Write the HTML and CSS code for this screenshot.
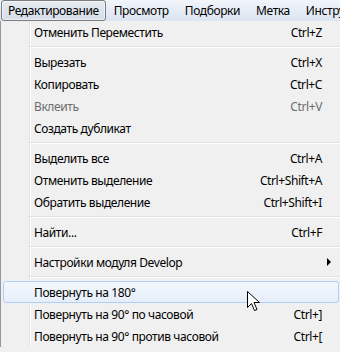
FILE: index.html
```html
<!DOCTYPE html>
<html lang="ru">
<head>
    <meta charset="UTF-8">
    <title>Редактирование</title>
    <link rel="stylesheet" href="styles.css">
</head>
<body>
    <div class="menubar">
        <span class="top open">Редактирование</span>
        <span class="top">Просмотр</span>
        <span class="top">Подборки</span>
        <span class="top">Метка</span>
        <span class="top">Инструменты</span>
    </div>

    <div class="menu">
        <div class="item"><span class="label">Отменить Переместить</span><span class="key">Ctrl+Z</span><span class="sub"></span></div>
        <div class="sep"></div>
        <div class="item"><span class="label">Вырезать</span><span class="key">Ctrl+X</span><span class="sub"></span></div>
        <div class="item"><span class="label">Копировать</span><span class="key">Ctrl+C</span><span class="sub"></span></div>
        <div class="item disabled"><span class="label">Вклеить</span><span class="key">Ctrl+V</span><span class="sub"></span></div>
        <div class="item"><span class="label">Создать дубликат</span><span class="key"></span><span class="sub"></span></div>
        <div class="sep"></div>
        <div class="item"><span class="label">Выделить все</span><span class="key">Ctrl+A</span><span class="sub"></span></div>
        <div class="item"><span class="label">Отменить выделение</span><span class="key">Ctrl+Shift+A</span><span class="sub"></span></div>
        <div class="item"><span class="label">Обратить выделение</span><span class="key">Ctrl+Shift+I</span><span class="sub"></span></div>
        <div class="sep"></div>
        <div class="item"><span class="label">Найти...</span><span class="key">Ctrl+F</span><span class="sub"></span></div>
        <div class="sep"></div>
        <div class="item"><span class="label">Настройки модуля Develop</span><span class="key"></span><span class="sub"><span class="arrow"></span></span></div>
        <div class="sep"></div>
        <div class="item hot">
            <span class="label">Повернуть на 180°</span><span class="key"></span><span class="sub"></span>
            <svg class="cursor" width="13" height="20" viewBox="0 0 13 20">
                <path d="M0.5 0.5 L0.5 16.5 L4.5 12.5 L7.5 19.5 L10 18.5 L7 11.5 L12.5 11.5 Z" fill="#fff" stroke="#000" stroke-width="1" stroke-linejoin="miter"/>
            </svg>
        </div>
        <div class="item"><span class="label">Повернуть на 90° по часовой</span><span class="key">Ctrl+]</span><span class="sub"></span></div>
        <div class="item"><span class="label">Повернуть на 90° против часовой</span><span class="key">Ctrl+[</span><span class="sub"></span></div>
    </div>
</body>
</html>
```

FILE: styles.css
```css
body { margin: 0; font-family: "Noto Sans", "Open Sans", sans-serif; font-size: 12px; letter-spacing: -0.4px; color: #000; background: #f0f0f0; overflow: hidden; }

/* menu bar */
.menubar { display: flex; align-items: center; height: 21px; background: linear-gradient(#f1f5fb, #dbe4f1); white-space: nowrap; overflow: hidden; }
.top { padding: 0 7px; line-height: 19px; border: 1px solid transparent; }
.top.open { margin-left: 1px; padding: 0 6px; border-color: #7b7b7b; border-radius: 3px; background: linear-gradient(#e6ebf1, #d6dde7); box-shadow: inset 0 0 0 1px rgba(255,255,255,0.5); }

/* dropdown */
.menu { border-left: 1px solid #979797; background: linear-gradient(to right, transparent 28px, #e2e3e3 28px, #e2e3e3 29px, #fff 29px, #fff 30px, transparent 30px), #f0f0f0; }
.item { position: relative; display: flex; align-items: center; height: 22px; padding-left: 33px; white-space: nowrap; }
.label { flex: 1; }
.key { text-align: right; }
.sub { width: 18px; flex: none; display: flex; align-items: center; }
.disabled { color: #6d6d6d; }
.arrow { margin-left: 5px; width: 0; height: 0; border-top: 4px solid transparent; border-bottom: 4px solid transparent; border-left: 4px solid #000; }

.sep { height: 8px; display: flex; align-items: center; padding-left: 29px; }
.sep::after { content: ''; flex: 1; height: 1px; background: #e0e0e0; border-bottom: 1px solid #fff; }

.hot { height: 20px; margin: 0 1px 0 2px; padding-left: 30px; border: 1px solid #aecff7; border-radius: 3px; background: linear-gradient(#f3f7fd, #e6eef9); }
.hot .sub { width: 16px; }
.cursor { position: absolute; left: 243px; top: 9px; }
```
